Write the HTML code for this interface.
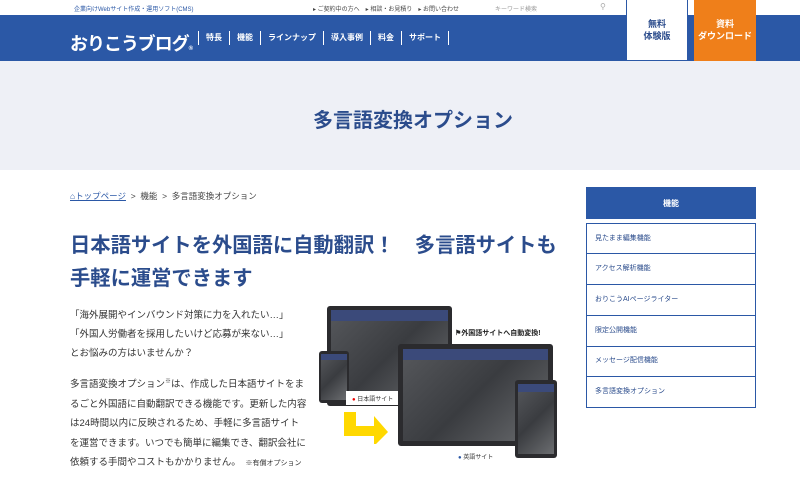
<!DOCTYPE html>
<html><head><meta charset="utf-8"><style>
*{margin:0;padding:0;box-sizing:border-box}
body{width:800px;height:488px;overflow:hidden;background:#fff;font-family:"Liberation Sans","Noto Sans CJK JP",sans-serif;color:#333;position:relative}
.a{position:absolute}
.top{top:0;left:0;width:800px;height:15px;background:#fff;font-size:6px;color:#2b58a6}
.hdr{top:15px;left:0;width:800px;height:46px;background:#2b58a6}
.nav{top:31px;left:198px;display:flex;color:#fff;font-size:8px;font-weight:bold}
.nav span{border-left:1px solid #fff;padding:0 7px;line-height:14px}
.nav span:last-child{border-right:1px solid #fff}
.banner{top:61px;left:0;width:800px;height:109px;background:#eef0f6}
.dev{background:#2b2b2e;border-radius:3px}
.scr{position:absolute;background:linear-gradient(135deg,#56585c,#3a3c40 50%,#6b6d70);}
.scr::before{content:"";position:absolute;left:0;top:0;right:0;height:12%;background:#3b4a7a}
.side{left:586px;width:170px;border:1.5px solid #2b58a6;border-top:none;height:31px;font-size:7px;color:#2b4c8c;padding-left:8px;line-height:30px}
</style></head><body>
<div class="a top">
<span class="a" style="left:74px;top:4px">企業向けWebサイト作成・運用ソフト(CMS)</span>
<span class="a" style="left:313px;top:4px;color:#444">▸ ご契約中の方へ　▸ 相談・お見積り　▸ お問い合わせ</span>
<span class="a" style="left:495px;top:4px;color:#999">キーワード検索</span>
<span class="a" style="left:600px;top:2px;color:#aaa;font-size:8px">&#9906;</span>
</div>
<div class="a hdr"></div>
<div class="a" style="left:70px;top:30px;color:#fff;font-size:18px;font-weight:bold;letter-spacing:-1px">おりこうブログ<span style="font-size:6px">®</span></div>
<div class="a nav"><span>特長</span><span>機能</span><span>ラインナップ</span><span>導入事例</span><span>料金</span><span>サポート</span></div>
<div class="a" style="left:626px;top:0;width:62px;height:61px;background:#fff;border:1px solid #2b58a6;border-top:none;color:#2b4c8c;font-size:9px;font-weight:bold;text-align:center;padding-top:18px;line-height:12px">無料<br>体験版</div>
<div class="a" style="left:694px;top:0;width:62px;height:61px;background:#ef7f1a;color:#fff;font-size:9px;font-weight:bold;text-align:center;padding-top:18px;line-height:12px">資料<br>ダウンロード</div>
<div class="a banner"></div>
<div class="a" style="left:313px;top:104px;font-size:20px;font-weight:bold;color:#2b4c8c;white-space:nowrap">多言語変換オプション</div>
<div class="a" style="left:70px;top:190px;font-size:8.5px;color:#444;white-space:nowrap"><span style="color:#2b58a6;text-decoration:underline">&#8962;トップページ</span> &nbsp;&gt;&nbsp; 機能 &nbsp;&gt;&nbsp; 多言語変換オプション</div>
<div class="a" style="left:70px;top:230px;width:510px;font-size:20.3px;font-weight:bold;color:#2b4c8c;line-height:33px;white-space:nowrap">日本語サイトを外国語に自動翻訳！　多言語サイトも<br>手軽に運営できます</div>
<div class="a" style="left:70px;top:306px;font-size:9.5px;line-height:19px;color:#333;white-space:nowrap">「海外展開やインバウンド対策に力を入れたい…」<br>「外国人労働者を採用したいけど応募が来ない…」<br>とお悩みの方はいませんか？</div>
<div class="a" style="left:70px;top:373px;font-size:9.5px;line-height:19.5px;color:#333;white-space:nowrap">多言語変換オプション<sup style="font-size:6px">※</sup>は、作成した日本語サイトをま<br>るごと外国語に自動翻訳できる機能です。更新した内容<br>は24時間以内に反映されるため、手軽に多言語サイト<br>を運営できます。いつでも簡単に編集でき、翻訳会社に<br>依頼する手間やコストもかかりません。　<span style="font-size:7px">※有償オプション</span></div>
<!-- illustration -->
<div class="a dev" style="left:327px;top:306px;width:125px;height:100px"><div class="scr" style="left:4px;top:4px;right:4px;bottom:4px"></div></div>
<div class="a dev" style="left:319px;top:351px;width:30px;height:52px"><div class="scr" style="left:2px;top:3px;right:2px;bottom:3px"></div></div>
<div class="a" style="left:346px;top:391px;width:56px;height:14px;background:#fff"></div>
<div class="a" style="left:352px;top:394px;font-size:6px;color:#333"><span style="color:#e00">●</span> 日本語サイト</div>
<div class="a" style="left:455px;top:328px;font-size:7px;font-weight:bold;color:#222">⚑外国語サイトへ自動変換!</div>
<svg class="a" style="left:342px;top:410px" width="50" height="34"><path d="M2 2h12v14h18v-10l14 16-14 14v-10H2z" fill="#ffd800"/></svg>
<div class="a dev" style="left:398px;top:344px;width:155px;height:102px"><div class="scr" style="left:5px;top:5px;right:5px;bottom:5px"></div></div>
<div class="a dev" style="left:515px;top:380px;width:42px;height:78px"><div class="scr" style="left:3px;top:4px;right:3px;bottom:4px"></div></div>
<div class="a" style="left:458px;top:452px;font-size:6px;color:#333"><span style="color:#2b58a6">●</span> 英語サイト</div>
<!-- sidebar -->
<div class="a" style="left:586px;top:187px;width:170px;height:32px;background:#2b58a6;color:#fff;font-size:8px;font-weight:bold;text-align:center;line-height:34px">機能</div>
<div class="a side" style="top:223px;border-top:1.5px solid #2b58a6">見たまま編集機能</div>
<div class="a side" style="top:254px">アクセス解析機能</div>
<div class="a side" style="top:285px">おりこうAIページライター</div>
<div class="a side" style="top:316px">限定公開機能</div>
<div class="a side" style="top:346px">メッセージ配信機能</div>
<div class="a side" style="top:377px">多言語変換オプション</div>
</body></html>
